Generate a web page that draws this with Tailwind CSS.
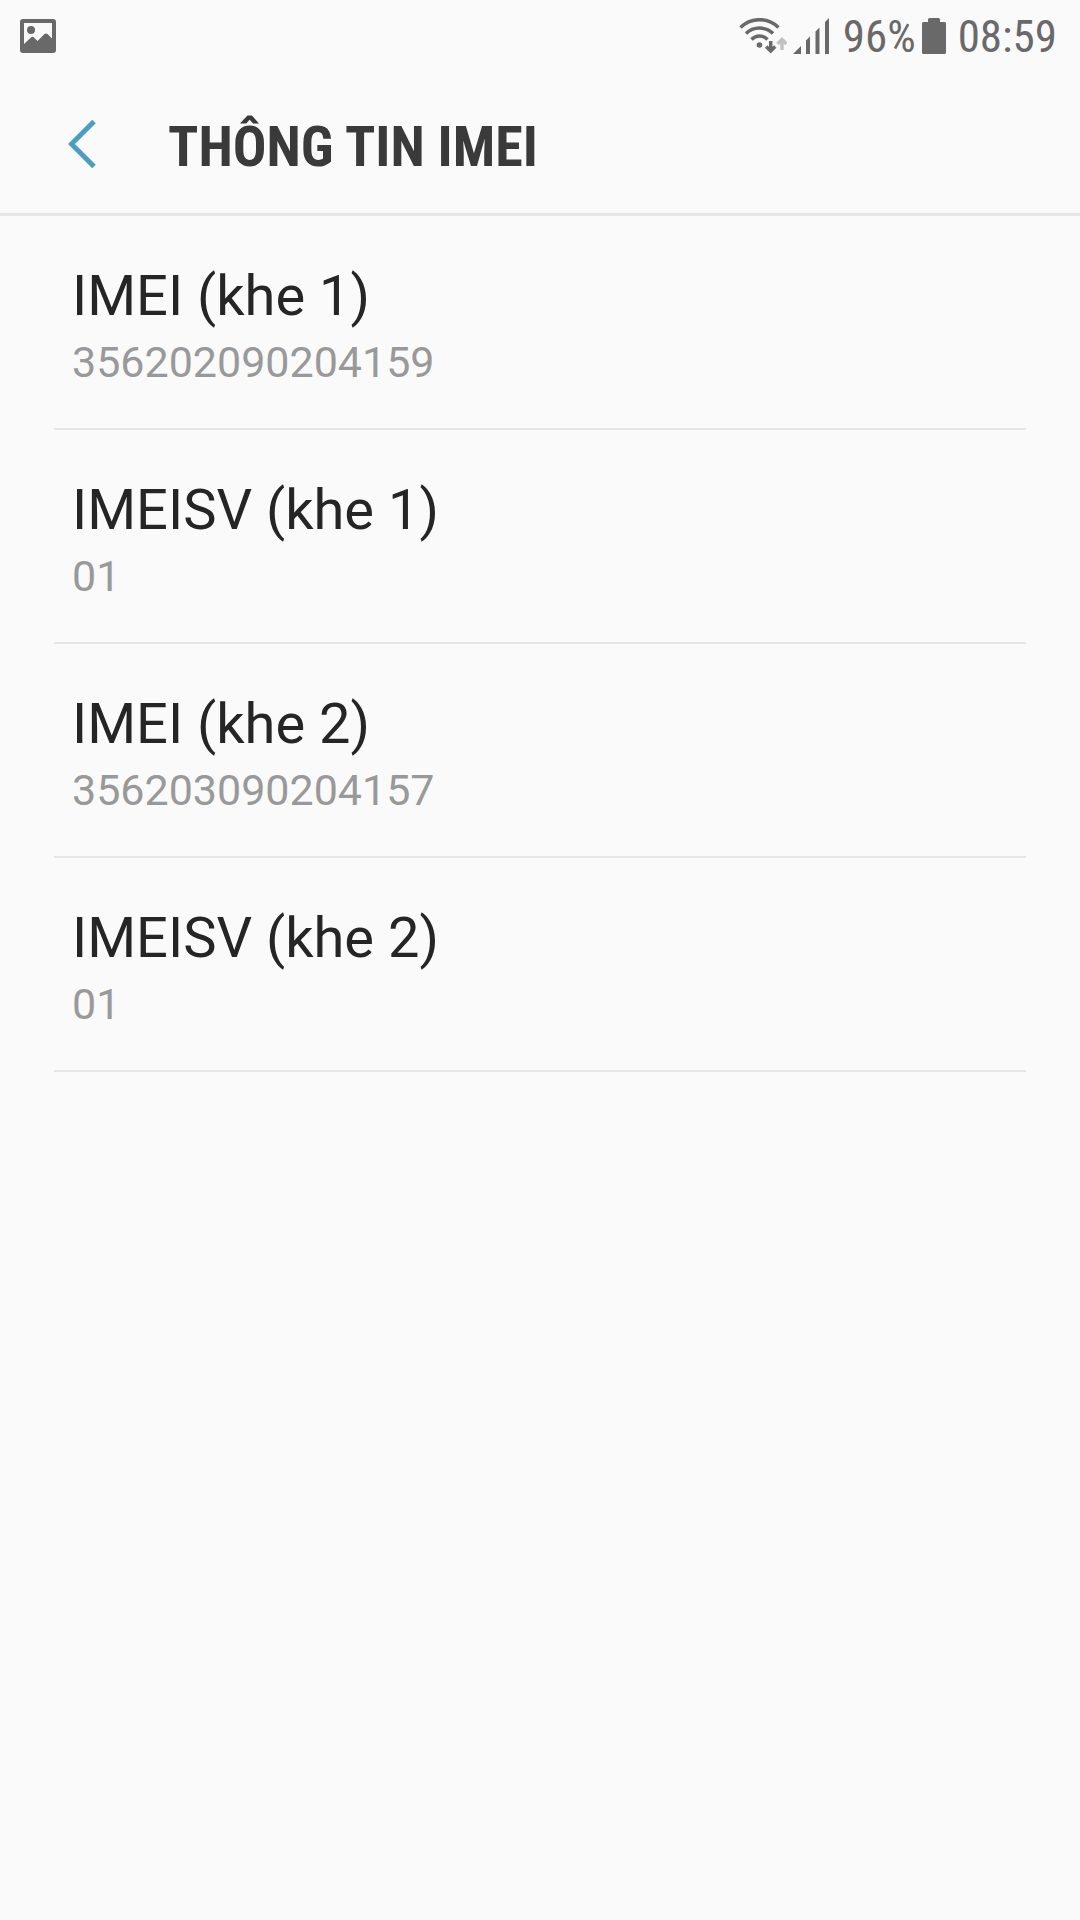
<!DOCTYPE html>
<html lang="vi">
  <head>
    <meta charset="UTF-8" />
    <meta name="viewport" content="width=device-width, initial-scale=1.0" />
    <title>Thông tin IMEI</title>
    <script src="https://cdn.jsdelivr.net/npm/@tailwindcss/browser@4"></script>
  </head>
  <body class="min-h-screen bg-[#fafafa] font-['Roboto',sans-serif] text-[#252525]">
    <!-- Status bar -->
    <div
      class="flex h-[72px] items-center justify-between pr-[23px] pl-5 font-['Roboto_Condensed','Roboto',sans-serif] text-[45px] leading-[56px] text-[#696969]"
    >
      <svg class="h-[34px] w-9" viewBox="0 0 36 34" fill="currentColor">
        <path
          fill-rule="evenodd"
          d="M3 0h30a3 3 0 0 1 3 3v28a3 3 0 0 1-3 3H3a3 3 0 0 1-3-3V3a3 3 0 0 1 3-3zM4 4v21l7.500-7q1-.7 2 0l4 4 7-7q1.500-1.200 3 0l4.500 4.500V4z"
        />
        <circle cx="11" cy="11" r="4" />
      </svg>
      <div class="flex items-center">
        <svg class="h-9 w-12" viewBox="0 0 48 36" fill="none" stroke="currentColor" stroke-width="3.500">
          <path d="M1.500 9.500Q9.500 1.700 20.500 1.700T39.500 9.500" />
          <path d="M7 15.500Q12.500 10 20.500 10T34 15.500" />
          <path d="M12.500 21.500Q16 18 20.500 18T28.500 21.500" />
          <circle cx="20.500" cy="27" r="2.800" fill="currentColor" stroke="none" />
          <path d="M31.700 23v10M27.200 28.500l4.500 4.500 4.500-4.500" />
          <path d="M43 32V22M38.500 26l4.500-4.500 4.500 4.500" stroke="#c2c2c2" />
        </svg>
        <svg class="ml-1.5 h-9 w-9" viewBox="0 0 36 36" fill="currentColor">
          <path d="M0 36l8-8v8zM13 36V22.500l4-4V36zM22.500 36V13.500l4-4V36zM32 36V4l4-4v36z" />
        </svg>
        <span class="ml-3.5 pt-0.5">96%</span>
        <svg class="ml-1.5 h-9 w-6" viewBox="0 0 24 36" fill="currentColor">
          <path
            d="M7.500 0h9q1.500 0 1.500 1.500V4h4.500Q24 4 24 5.500v29q0 1.500-1.500 1.500h-21Q0 36 0 34.500v-29Q0 4 1.500 4H6V1.500Q6 0 7.500 0z"
          />
        </svg>
        <time class="ml-3 pt-0.5">08:59</time>
      </div>
    </div>

    <!-- Header -->
    <header class="flex h-36 items-center border-b-3 border-[#e7e7e7] pt-0.5 pl-[60px]">
      <button type="button" aria-label="Quay lại" class="flex h-24 w-27 items-center pl-2">
        <svg class="h-12 w-7 text-[#4a9fc0]" viewBox="0 0 28 48" fill="none" stroke="currentColor" stroke-width="5">
          <path d="M26 1.500L3.500 24 26 46.500" />
        </svg>
      </button>
      <h1
        class="pt-1.5 font-['Roboto_Condensed','Roboto',sans-serif] text-[56px] leading-[66px] font-bold text-[#3a3a3a]"
      >
        THÔNG TIN IMEI
      </h1>
    </header>

    <!-- IMEI list -->
    <dl class="mx-[54px]">
      <div class="border-b-2 border-[#e6e6e6] px-[18px] pt-[47px] pb-[41px]">
        <dt class="text-[56px] leading-[66px]">IMEI (khe 1)</dt>
        <dd class="mt-2 text-[43px] leading-[50px] text-[#999999]">356202090204159</dd>
      </div>
      <div class="border-b-2 border-[#e6e6e6] px-[18px] pt-[47px] pb-[41px]">
        <dt class="text-[56px] leading-[66px]">IMEISV (khe 1)</dt>
        <dd class="mt-2 text-[43px] leading-[50px] text-[#999999]">01</dd>
      </div>
      <div class="border-b-2 border-[#e6e6e6] px-[18px] pt-[47px] pb-[41px]">
        <dt class="text-[56px] leading-[66px]">IMEI (khe 2)</dt>
        <dd class="mt-2 text-[43px] leading-[50px] text-[#999999]">356203090204157</dd>
      </div>
      <div class="border-b-2 border-[#e6e6e6] px-[18px] pt-[47px] pb-[41px]">
        <dt class="text-[56px] leading-[66px]">IMEISV (khe 2)</dt>
        <dd class="mt-2 text-[43px] leading-[50px] text-[#999999]">01</dd>
      </div>
    </dl>
  </body>
</html>
